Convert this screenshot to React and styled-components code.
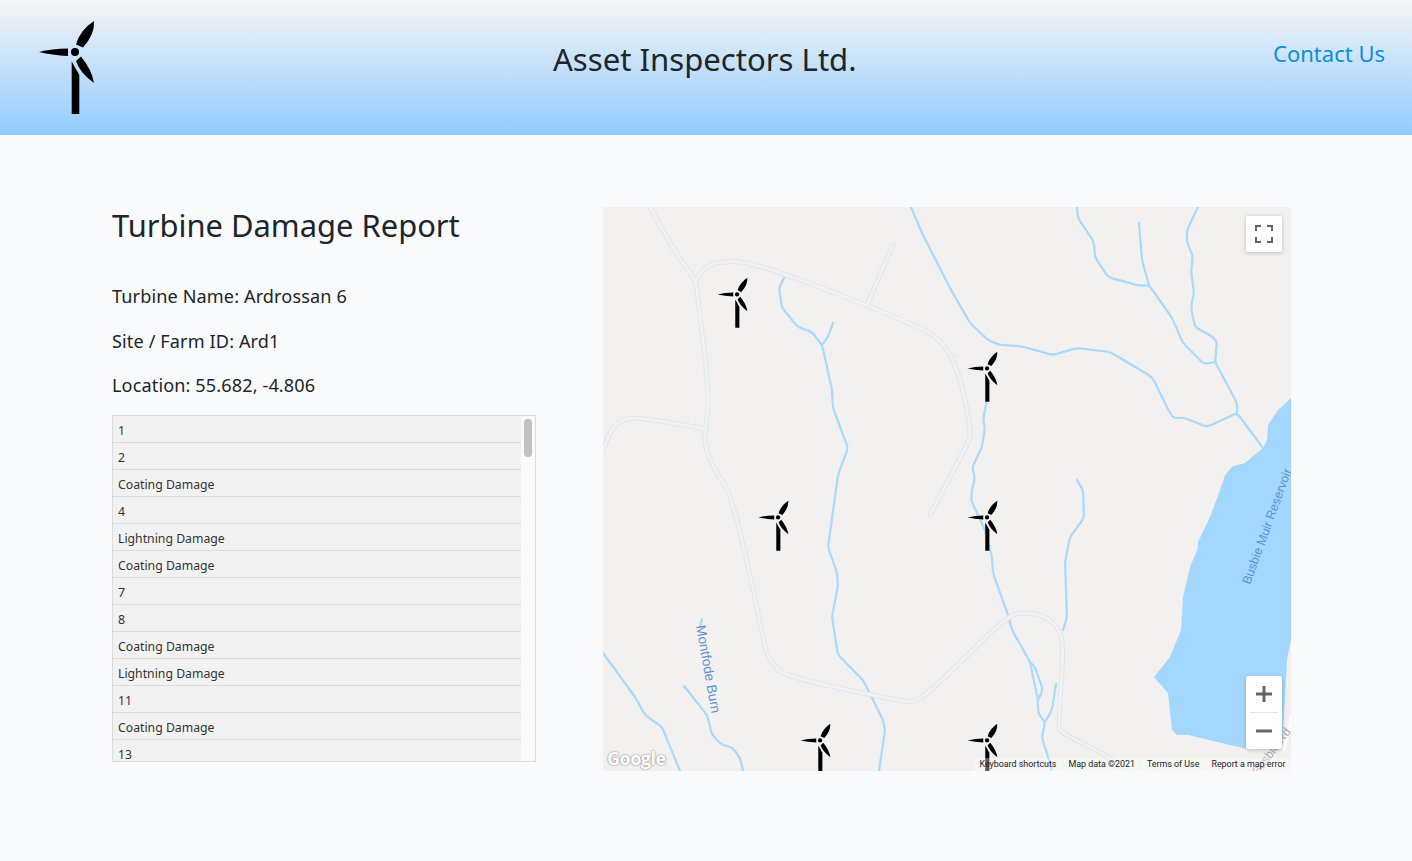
import React from 'react';
import styled, { createGlobalStyle } from 'styled-components';

const GlobalStyle = createGlobalStyle`
  html, body { margin: 0; padding: 0; }
  body {
    background: #f9fafc;
    color: #212529;
    font-family: "Noto Sans", "Open Sans", sans-serif;
  }
`;

const Page = styled.div`
  min-height: 861px;
  overflow: hidden;
`;

const Header = styled.header`
  height: 135px;
  box-sizing: border-box;
  padding: 18px 27px 0 36px;
  display: grid;
  grid-template-columns: 517px auto 1fr;
  background: linear-gradient(180deg, #f4f5f7 0%, #93cbfd 100%);
`;

const Logo = styled.svg`
  width: 60px;
  height: 98px;
  display: block;
`;

const Title = styled.h1`
  margin: 21px 0 0;
  font-size: 31.1px;
  line-height: 40px;
  font-weight: 400;
`;

const ContactLink = styled.a`
  justify-self: end;
  margin-top: 19px;
  font-size: 22px;
  line-height: 32px;
  color: #0b8fdc;
  text-decoration: none;
`;

const Main = styled.main`
  display: flex;
  gap: 67px;
  padding: 72px 0 0 112px;
`;

const ReportColumn = styled.section`
  width: 424px;
`;

const Heading = styled.h2`
  margin: 0 0 41px;
  font-size: 30.9px;
  line-height: 36px;
  font-weight: 400;
`;

const Details = styled.div`
  display: flex;
  flex-direction: column;
  gap: 19px;
  margin-bottom: 16px;
`;

const Detail = styled.p`
  margin: 0;
  font-size: 18.1px;
  line-height: 25.5px;
  letter-spacing: 0.12px;
`;

const DamageList = styled.div`
  display: flex;
  width: 424px;
  height: 347px;
  box-sizing: border-box;
  border: 1px solid #dcdcdc;
  overflow: hidden;
`;

const DamageRows = styled.div`
  flex: 1;
  min-width: 0;
`;

const DamageRow = styled.div`
  height: 27px;
  box-sizing: border-box;
  padding: 0 5px;
  border-bottom: 1px solid #dcdcdc;
  background: #f2f2f2;
  font-size: 12.25px;
  line-height: 29px;
  color: #333;
`;

const ScrollTrack = styled.div`
  width: 14px;
  box-sizing: border-box;
  padding: 3px 3px 0 3px;
  background: #fafafa;
`;

const ScrollThumb = styled.div`
  height: 38px;
  border-radius: 4px;
  background: #c1c1c1;
`;

const MapPanel = styled.div`
  position: relative;
  width: 688px;
  height: 564px;
  overflow: hidden;
  background: #f2f1ef;
`;

const MapArt = styled.svg`
  display: block;
  width: 688px;
  height: 564px;
`;

const Marker = styled.svg`
  position: absolute;
  left: ${(p) => p.$x - 603 - 21}px;
  top: ${(p) => p.$y - 207 - 18.5}px;
  width: 32.4px;
  height: 53px;
`;

const ControlCard = styled.div`
  position: absolute;
  left: 643px;
  top: ${(p) => p.$top}px;
  width: 36px;
  background: #fff;
  border-radius: 2px;
  box-shadow: 0 1px 4px rgba(0, 0, 0, 0.22);
`;

const ControlButton = styled.div`
  height: 36px;
  display: flex;
  align-items: center;
  justify-content: center;
`;

const ControlDivider = styled.div`
  height: 1px;
  margin: 0 4px;
  background: #e6e6e6;
`;

const ControlIcon = styled.svg`
  width: 18px;
  height: 18px;
  fill: none;
  stroke: #666;
`;

const GoogleMark = styled.div`
  position: absolute;
  left: 4px;
  bottom: 2px;
  font-family: "Open Sans", sans-serif;
  font-size: 18px;
  line-height: 22px;
  font-weight: 700;
  letter-spacing: -0.5px;
  color: #fff;
  text-shadow: 0 0 2px #8d8d8d, 0 0 1px #8d8d8d;
`;

const Attribution = styled.div`
  position: absolute;
  right: 0;
  bottom: 0;
  display: flex;
  gap: 1px;
`;

const AttributionItem = styled.span`
  padding: 0 5.5px;
  height: 13px;
  background: rgba(255, 255, 255, 0.35);
  font-family: Roboto, sans-serif;
  font-size: 8.9px;
  line-height: 13px;
  color: #222;
  white-space: nowrap;
`;

const turbinePositions = [
  [737, 294],
  [987, 368],
  [778, 517],
  [987, 517],
  [820, 740],
  [987, 740],
];

const damageRows = [
  '1', '2', 'Coating Damage', '4', 'Lightning Damage', 'Coating Damage', '7', '8',
  'Coating Damage', 'Lightning Damage', '11', 'Coating Damage', '13',
];

const smooth = (pts) => {
  let d = `M${pts[0][0]} ${pts[0][1]}`;
  for (let i = 1; i < pts.length - 1; i++) {
    const mx = (pts[i][0] + pts[i + 1][0]) / 2;
    const my = (pts[i][1] + pts[i + 1][1]) / 2;
    d += ` Q${pts[i][0]} ${pts[i][1]} ${mx} ${my}`;
  }
  const last = pts[pts.length - 1];
  return `${d} L${last[0]} ${last[1]}`;
};

// rounds each corner of a polyline by a few px, keeps long runs straight
const rounded = (pts, r = 4) => {
  let d = `M${pts[0][0]} ${pts[0][1]}`;
  for (let i = 1; i < pts.length - 1; i++) {
    const [x, y] = pts[i];
    const toward = ([ox, oy]) => {
      const len = Math.hypot(ox - x, oy - y);
      const t = Math.min(r, len / 2) / len;
      return [x + (ox - x) * t, y + (oy - y) * t];
    };
    const a = toward(pts[i - 1]);
    const b = toward(pts[i + 1]);
    d += ` L${a[0]} ${a[1]} Q${x} ${y} ${b[0]} ${b[1]}`;
  }
  const last = pts[pts.length - 1];
  return `${d} L${last[0]} ${last[1]}`;
};

const roads = [
  smooth([[650, 207], [675, 253], [696, 280], [698, 300], [710, 398], [705, 430], [704, 443], [715, 472], [730, 490], [753, 587], [765, 650], [773, 665], [787, 677], [905, 702], [917, 702], [950, 673], [1008, 615], [1027, 612], [1047, 617], [1062, 632], [1063, 663], [1058, 727], [1062, 733], [1110, 757], [1125, 771]]),
  smooth([[696, 280], [703, 268], [717, 262], [750, 261], [867, 305], [925, 330], [940, 340], [952, 357], [963, 387], [970, 427], [970, 440], [950, 477], [930, 515]]),
  'M867 305 L893 245',
  smooth([[705, 429], [642, 417], [620, 420], [610, 432], [603, 450]]),
];

const rivers = [
  [[784, 278], [779, 288], [782, 308], [798, 327], [812, 332], [822, 345], [827, 367], [832, 390], [833, 408], [848, 448], [838, 475], [836, 490], [828, 547], [837, 573], [838, 585], [832, 617], [838, 655], [863, 680], [883, 720], [885, 730], [879, 771]],
  [[822, 345], [828, 337], [833, 323]],
  [[911, 207], [922, 233], [950, 288], [970, 323], [988, 340], [1000, 345], [1020, 346], [1053, 355], [1077, 348], [1110, 352], [1152, 377], [1167, 407], [1173, 418], [1185, 418], [1207, 427], [1237, 413], [1263, 448]],
  [[1077, 207], [1078, 218], [1094, 242], [1095, 257], [1108, 277], [1140, 286], [1149, 285], [1172, 318], [1183, 343], [1204, 364], [1215, 362]],
  [[1139, 223], [1142, 260], [1149, 285]],
  [[1198, 207], [1187, 230], [1187, 242], [1193, 257], [1191, 270], [1194, 293], [1191, 307], [1195, 327], [1213, 337], [1217, 342], [1215, 362], [1237, 403], [1237, 413]],
  [[987, 400], [983, 420], [985, 427], [982, 447], [972, 468], [975, 477], [972, 490], [971, 500], [985, 530], [992, 557], [993, 573], [1008, 615], [1012, 630], [1030, 662], [1038, 700], [1038, 713], [1045, 722], [1042, 738], [1048, 757], [1052, 771]],
  [[1030, 662], [1035, 667], [1043, 690], [1038, 700]],
  [[1056, 684], [1052, 710], [1045, 722]],
  [[1077, 480], [1083, 490], [1084, 518], [1070, 537], [1065, 562], [1067, 617], [1063, 630]],
  [[603, 653], [635, 697], [645, 715], [662, 727], [680, 771]],
  [[684, 686], [707, 715], [712, 735], [722, 745], [732, 747], [740, 758], [743, 771]],
  [[702, 619], [700, 627]],
];

const lake = '1291,398 1278,410 1268,425 1267,440 1263,448 1252,457 1245,463 1233,466 1225,475 1220,490 1210,517 1198,542 1198,548 1190,567 1183,597 1181,630 1170,657 1154,677 1168,693 1172,730 1177,735 1188,735 1247,749 1282,749 1285,697 1287,660 1291,640';

const TurbineShape = () => (
  <>
    <path d="M39 52 Q52 48.5 68 48.5 L68 56 Q52 55 39 52Z" fill="#000" />
    <path d="M94 21 Q95 34 83 47.5 L76 44.5 Q80 30 94 21Z" fill="#000" />
    <path d="M94 83 Q80 73 76 61 L81 56.5 Q92 70 94 83Z" fill="#000" />
    <path d="M71.7 61.5 L79.3 75 L79.3 114 L71.7 114Z" fill="#000" />
    <circle cx="75" cy="52" r="4" fill="#000" />
  </>
);

export default function App() {
  return (
    <Page>
      <GlobalStyle />
      <Header>
        <Logo viewBox="36 18 60 98"><TurbineShape /></Logo>
        <Title>Asset Inspectors Ltd.</Title>
        <ContactLink href="#contact">Contact Us</ContactLink>
      </Header>
      <Main>
        <ReportColumn>
          <Heading>Turbine Damage Report</Heading>
          <Details>
            <Detail>Turbine Name: Ardrossan 6</Detail>
            <Detail>Site / Farm ID: Ard1</Detail>
            <Detail>Location: 55.682, -4.806</Detail>
          </Details>
          <DamageList>
            <DamageRows>
              {damageRows.map((label, i) => (
                <DamageRow key={i}>{label}</DamageRow>
              ))}
            </DamageRows>
            <ScrollTrack>
              <ScrollThumb />
            </ScrollTrack>
          </DamageList>
        </ReportColumn>
        <MapPanel>
          <MapArt viewBox="603 207 688 564">
            <g stroke="#efeeec" strokeWidth="1">
              <path d="M695 207V771M925 207V771M1155 207V771M603 356H1291M603 586H1291" />
            </g>
            <polygon points={lake} fill="#a3d7fe" />
            <g fill="none" stroke="#a8d9fe" strokeWidth="2.2" strokeLinejoin="round" strokeLinecap="round">
              {rivers.map((pts, i) => (
                <path key={i} d={rounded(pts)} />
              ))}
            </g>
            <g fill="none" strokeLinejoin="round" strokeLinecap="round">
              {roads.map((d, i) => <path key={i} d={d} stroke="#e2e5e9" strokeWidth="5" />)}
              {roads.map((d, i) => <path key={i} d={d} stroke="#f0f2f4" strokeWidth="3" />)}
              <path d="M1291 717 Q1288 738 1283 750" stroke="#fff" strokeWidth="3" />
            </g>
            <g fontFamily="Liberation Sans, sans-serif" fill="#5b93d6">
              <text transform="translate(696 626) rotate(80)" fontSize="13.6">Montfode Burn</text>
              <text transform="translate(1250 585) rotate(-70)" fontSize="12.4">Busbie Muir Reservoir</text>
            </g>
            <text transform="translate(1258 776) rotate(-53)" fontFamily="Liberation Sans, sans-serif" fontSize="12" fill="#aaa">Busbie Rd</text>
          </MapArt>
          {turbinePositions.map(([x, y]) => (
            <Marker key={`${x}-${y}`} $x={x} $y={y} viewBox="36 18 60 98"><TurbineShape /></Marker>
          ))}
          <ControlCard $top={9}>
            <ControlButton>
              <ControlIcon viewBox="0 0 18 18" strokeWidth="2">
                <path d="M1 6V1H6M12 1H17V6M17 12V17H12M6 17H1V12" />
              </ControlIcon>
            </ControlButton>
          </ControlCard>
          <ControlCard $top={469}>
            <ControlButton>
              <ControlIcon viewBox="0 0 18 18" strokeWidth="3">
                <path d="M1 9H17M9 1V17" />
              </ControlIcon>
            </ControlButton>
            <ControlDivider />
            <ControlButton>
              <ControlIcon viewBox="0 0 18 18" strokeWidth="3">
                <path d="M1 9H17" />
              </ControlIcon>
            </ControlButton>
          </ControlCard>
          <GoogleMark>Google</GoogleMark>
          <Attribution>
            <AttributionItem>Keyboard shortcuts</AttributionItem>
            <AttributionItem>Map data ©2021</AttributionItem>
            <AttributionItem>Terms of Use</AttributionItem>
            <AttributionItem>Report a map error</AttributionItem>
          </Attribution>
        </MapPanel>
      </Main>
    </Page>
  );
}
